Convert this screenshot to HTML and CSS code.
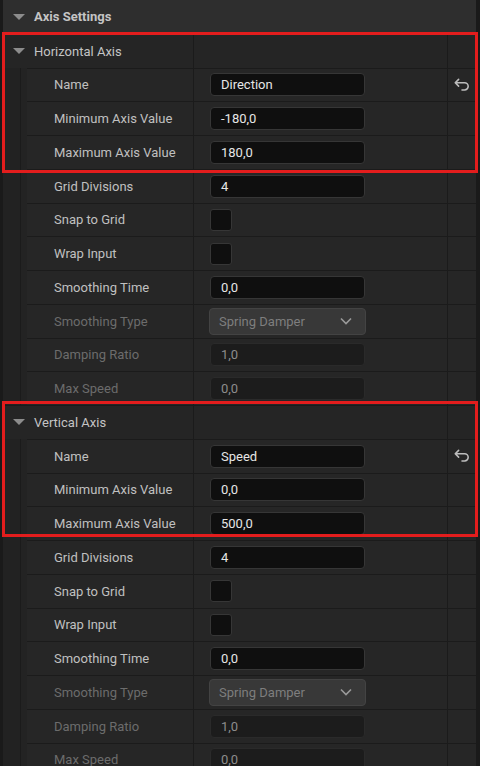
FILE: index.html
```html
<!DOCTYPE html>
<html lang="en">
<head>
  <meta charset="UTF-8">
  <meta name="viewport" content="width=device-width, initial-scale=1.0">
  <title>Axis Settings</title>
  <link rel="stylesheet" href="styles.css">
</head>
<body>
  <div class="panel">
    <div class="section-head">
      <span class="arrow"></span>
      <span>Axis Settings</span>
    </div>

    <!-- Horizontal axis -->
    <div class="row cat-row">
      <div class="cat-name"><span class="arrow"></span>Horizontal Axis</div>
      <div class="value-cell"></div>
      <div class="reset-cell"></div>
    </div>
    <div class="row">
      <div class="indent"></div>
      <div class="name-cell">Name</div>
      <div class="value-cell"><div class="field">Direction</div></div>
      <div class="reset-cell">
        <svg class="reset" viewBox="0 0 16 16" width="18" height="18"><path d="M5 3 L2 6 L5 9 M2.3 6 H10.3 A3.2 3.2 0 0 1 10.3 12.4 H8" /></svg>
      </div>
    </div>
    <div class="row">
      <div class="indent"></div>
      <div class="name-cell">Minimum Axis Value</div>
      <div class="value-cell"><div class="field">-180,0</div></div>
      <div class="reset-cell"></div>
    </div>
    <div class="row">
      <div class="indent"></div>
      <div class="name-cell">Maximum Axis Value</div>
      <div class="value-cell"><div class="field">180,0</div></div>
      <div class="reset-cell"></div>
    </div>
    <div class="row">
      <div class="indent"></div>
      <div class="name-cell">Grid Divisions</div>
      <div class="value-cell"><div class="field">4</div></div>
      <div class="reset-cell"></div>
    </div>
    <div class="row">
      <div class="indent"></div>
      <div class="name-cell">Snap to Grid</div>
      <div class="value-cell"><div class="check"></div></div>
      <div class="reset-cell"></div>
    </div>
    <div class="row">
      <div class="indent"></div>
      <div class="name-cell">Wrap Input</div>
      <div class="value-cell"><div class="check"></div></div>
      <div class="reset-cell"></div>
    </div>
    <div class="row">
      <div class="indent"></div>
      <div class="name-cell">Smoothing Time</div>
      <div class="value-cell"><div class="field">0,0</div></div>
      <div class="reset-cell"></div>
    </div>
    <div class="row disabled">
      <div class="indent"></div>
      <div class="name-cell">Smoothing Type</div>
      <div class="value-cell">
        <div class="combo"><span>Spring Damper</span>
          <svg viewBox="0 0 14 14" width="14" height="14"><path d="M2 4.5 L7 9.5 L12 4.5" /></svg>
        </div>
      </div>
      <div class="reset-cell"></div>
    </div>
    <div class="row disabled">
      <div class="indent"></div>
      <div class="name-cell">Damping Ratio</div>
      <div class="value-cell"><div class="field">1,0</div></div>
      <div class="reset-cell"></div>
    </div>
    <div class="row disabled">
      <div class="indent"></div>
      <div class="name-cell">Max Speed</div>
      <div class="value-cell"><div class="field">0,0</div></div>
      <div class="reset-cell"></div>
    </div>

    <!-- Vertical axis -->
    <div class="row cat-row">
      <div class="cat-name"><span class="arrow"></span>Vertical Axis</div>
      <div class="value-cell"></div>
      <div class="reset-cell"></div>
    </div>
    <div class="row">
      <div class="indent"></div>
      <div class="name-cell">Name</div>
      <div class="value-cell"><div class="field">Speed</div></div>
      <div class="reset-cell">
        <svg class="reset" viewBox="0 0 16 16" width="18" height="18"><path d="M5 3 L2 6 L5 9 M2.3 6 H10.3 A3.2 3.2 0 0 1 10.3 12.4 H8" /></svg>
      </div>
    </div>
    <div class="row">
      <div class="indent"></div>
      <div class="name-cell">Minimum Axis Value</div>
      <div class="value-cell"><div class="field">0,0</div></div>
      <div class="reset-cell"></div>
    </div>
    <div class="row">
      <div class="indent"></div>
      <div class="name-cell">Maximum Axis Value</div>
      <div class="value-cell"><div class="field">500,0</div></div>
      <div class="reset-cell"></div>
    </div>
    <div class="row">
      <div class="indent"></div>
      <div class="name-cell">Grid Divisions</div>
      <div class="value-cell"><div class="field">4</div></div>
      <div class="reset-cell"></div>
    </div>
    <div class="row">
      <div class="indent"></div>
      <div class="name-cell">Snap to Grid</div>
      <div class="value-cell"><div class="check"></div></div>
      <div class="reset-cell"></div>
    </div>
    <div class="row">
      <div class="indent"></div>
      <div class="name-cell">Wrap Input</div>
      <div class="value-cell"><div class="check"></div></div>
      <div class="reset-cell"></div>
    </div>
    <div class="row">
      <div class="indent"></div>
      <div class="name-cell">Smoothing Time</div>
      <div class="value-cell"><div class="field">0,0</div></div>
      <div class="reset-cell"></div>
    </div>
    <div class="row disabled">
      <div class="indent"></div>
      <div class="name-cell">Smoothing Type</div>
      <div class="value-cell">
        <div class="combo"><span>Spring Damper</span>
          <svg viewBox="0 0 14 14" width="14" height="14"><path d="M2 4.5 L7 9.5 L12 4.5" /></svg>
        </div>
      </div>
      <div class="reset-cell"></div>
    </div>
    <div class="row disabled">
      <div class="indent"></div>
      <div class="name-cell">Damping Ratio</div>
      <div class="value-cell"><div class="field">1,0</div></div>
      <div class="reset-cell"></div>
    </div>
    <div class="row disabled">
      <div class="indent"></div>
      <div class="name-cell">Max Speed</div>
      <div class="value-cell"><div class="field">0,0</div></div>
      <div class="reset-cell"></div>
    </div>

    <!-- highlight frames drawn over the two axis groups -->
    <div class="mark mark-h"></div>
    <div class="mark mark-v"></div>
  </div>
</body>
</html>
```

FILE: styles.css
```css
html, body {
  margin: 0;
  height: 766px;
  overflow: hidden;
}
body {
  background-color: #1a1a1a;
  font-family: Roboto, "Open Sans", sans-serif;
  font-size: 13px;
  color: #c0c0c0;
}
.panel {
  position: relative;
  margin-left: 3px;
  width: 473px;
}

.section-head {
  height: 33.75px;
  box-sizing: border-box;
  display: flex;
  align-items: center;
  padding-left: 10px;
  background-color: #2e2e2e;
  font-weight: bold;
  color: #c4c4c4;
}
.arrow {
  width: 0;
  height: 0;
  border-left: 6px solid transparent;
  border-right: 6px solid transparent;
  border-top: 6px solid #8c8c8c;
  margin-right: 9px;
}

.row {
  display: grid;
  grid-template-columns: 24px 166px 254px 29px;
  height: 33.75px;
  box-sizing: border-box;
  border-top: 1px solid #1b1b1b;
  background-color: #262626;
}
.row > div {
  display: flex;
  align-items: center;
}
.cat-row {
  background-color: #252525;
}
.cat-name {
  grid-column: 1 / 3;
  padding-left: 10px;
  color: #c4c4c4;
}
.indent {
  background: linear-gradient(to right, #222222 0, #222222 17px, #1b1b1b 17px, #1b1b1b 18px, #232323 18px);
  margin-top: -1px;
}
.name-cell {
  padding-left: 27px;
  white-space: nowrap;
}
.value-cell {
  border-left: 1px solid #1b1b1b;
  padding-left: 16px;
}
.reset-cell {
  border-left: 1px solid #1b1b1b;
  justify-content: center;
}

.field {
  width: 155px;
  height: 23px;
  box-sizing: border-box;
  background-color: #0f0f0f;
  border: 1px solid #363636;
  border-radius: 4px;
  padding-left: 10px;
  display: flex;
  align-items: center;
  color: #e6e6e6;
}
.check {
  width: 22px;
  height: 22px;
  box-sizing: border-box;
  background-color: #0f0f0f;
  border: 1px solid #363636;
  border-radius: 3px;
}
.combo {
  width: 157px;
  height: 27px;
  box-sizing: border-box;
  background-color: #383838;
  border: 1px solid #434343;
  border-radius: 4px;
  padding: 0 12px 0 9px;
  display: flex;
  align-items: center;
  justify-content: space-between;
  color: #7e7e7e;
  margin-left: -1px;
}
.combo svg path {
  fill: none;
  stroke: #9a9a9a;
  stroke-width: 1.6;
}

.disabled .name-cell {
  color: #6c6c6c;
}
.disabled .field {
  background-color: #1c1c1c;
  border-color: #2a2a2a;
  color: #8c8c8c;
}

.reset path {
  fill: none;
  stroke: #bdbdbd;
  stroke-width: 1.4;
  stroke-linecap: round;
  stroke-linejoin: round;
}

.mark {
  position: absolute;
  left: -1px;
  width: 476px;
  box-sizing: border-box;
  border: 3px solid #e31d1d;
  pointer-events: none;
}
.mark-h {
  top: 32px;
  height: 141px;
}
.mark-v {
  top: 401px;
  height: 136px;
}
```
